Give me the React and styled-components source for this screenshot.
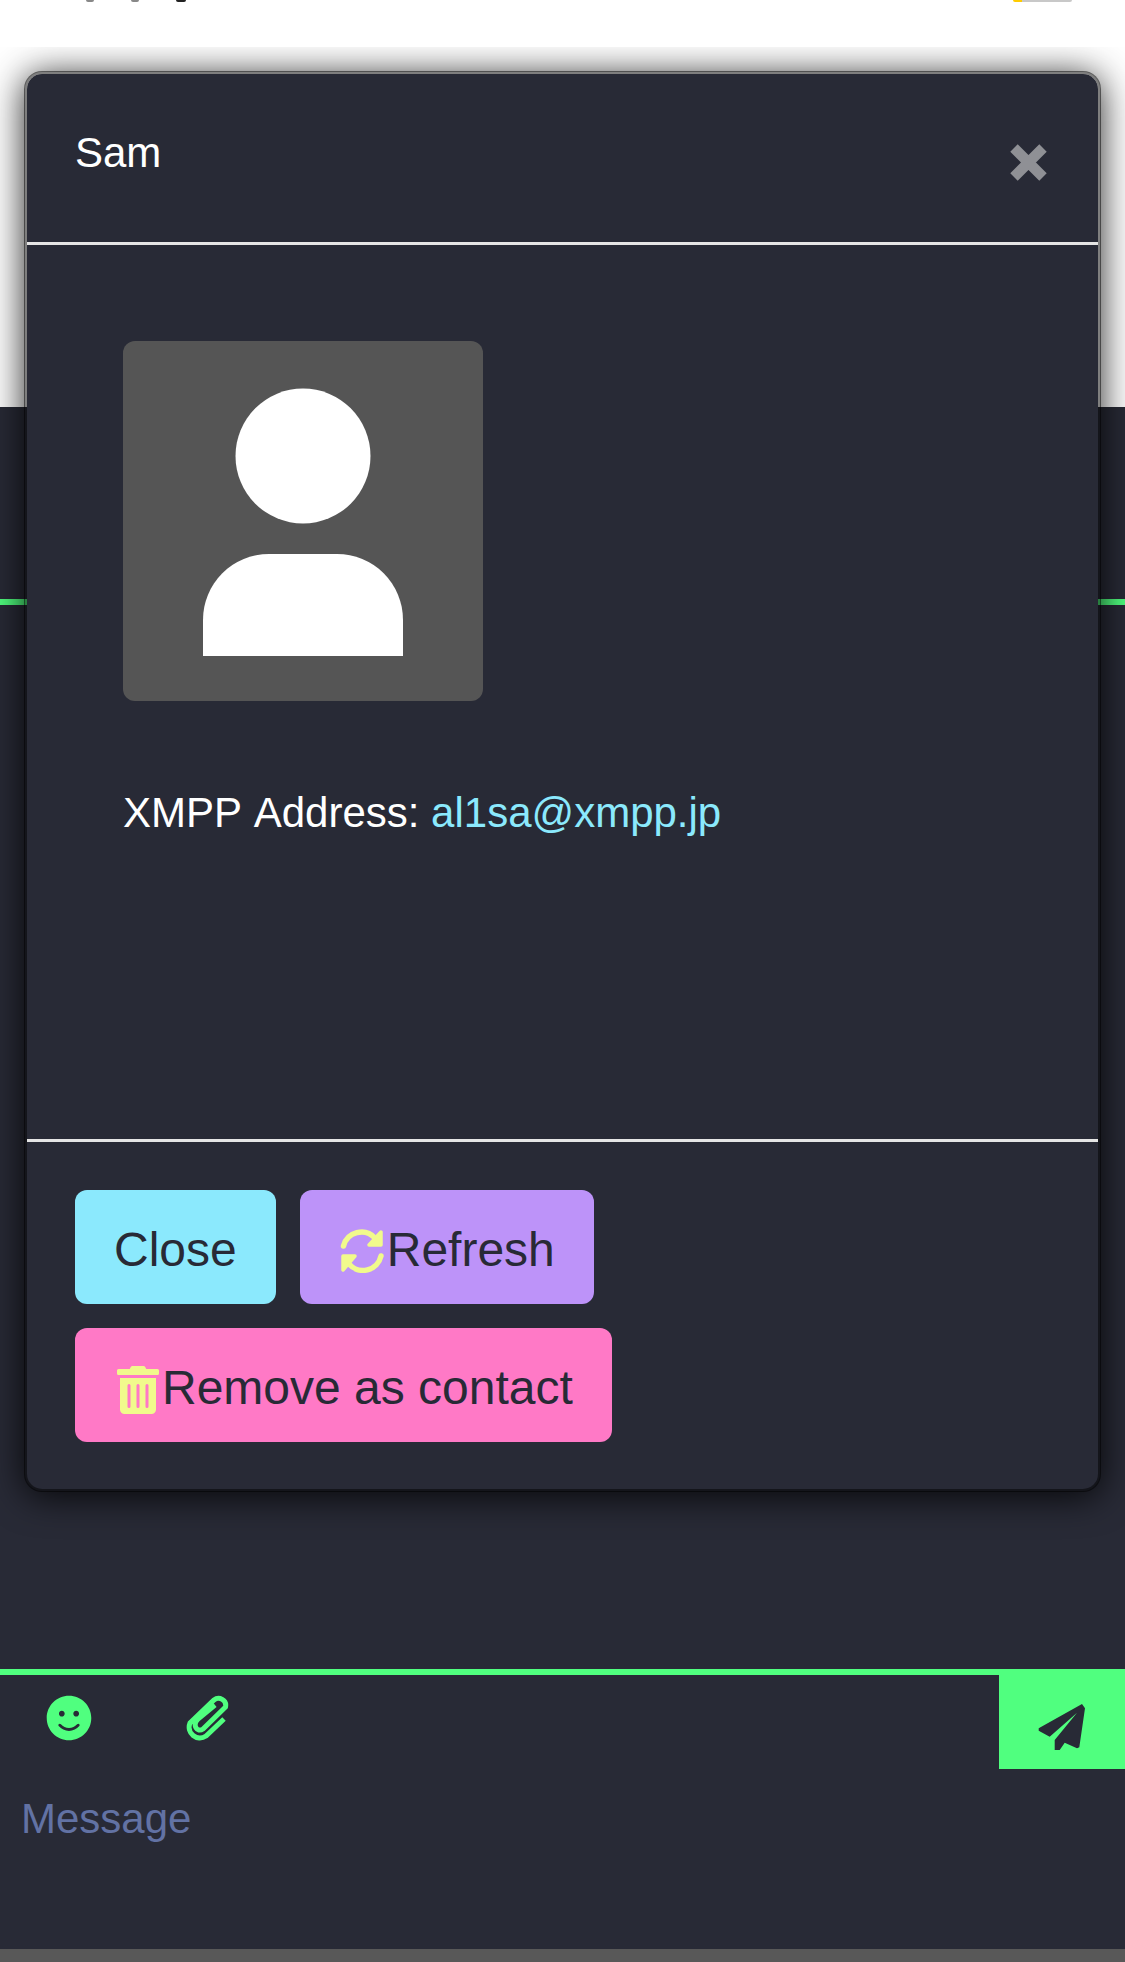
import styled, { createGlobalStyle } from "styled-components"
import { FaSmile, FaTrashAlt } from "react-icons/fa"

const GlobalStyle = createGlobalStyle`
    html, body {
        margin: 0;
        padding: 0;
        background: #282a36;
    }
    * {
        box-sizing: border-box;
    }
`

function RefreshIcon() {
    return (
        <RefreshSvg viewBox="-1 -4 48 48">
            <path d="M3.5 17 A18.5 18.5 0 0 1 35 9" fill="none" stroke="currentColor" strokeWidth="5.5" strokeLinecap="round" />
            <path d="M41 3 V16 H29 Z" fill="currentColor" stroke="currentColor" strokeWidth="3.5" strokeLinejoin="round" />
            <path d="M41 27 A18.5 18.5 0 0 1 9 35" fill="none" stroke="currentColor" strokeWidth="5.5" strokeLinecap="round" />
            <path d="M3 41 V27 H15 Z" fill="currentColor" stroke="currentColor" strokeWidth="3.5" strokeLinejoin="round" />
        </RefreshSvg>
    )
}

function ClipIcon() {
    return (
        <ClipSvg viewBox="0 0 44 47">
            <path
                d="M38 24 L20 41 C11 47 0 38 4 28 L28 5 C33 1 41 5 39.5 12 L17 34 C11 38 6 30 12 24 L29 10"
                fill="none"
                stroke="currentColor"
                strokeWidth="5"
            />
        </ClipSvg>
    )
}

function SendIcon() {
    return (
        <SendSvg viewBox="0 0 48 47">
            <path
                d="M44 0 L47 4.3 L41.3 43.3 L39 44.3 L26.7 38.7 L21.7 46 H16.7 V36 L39 8.7 L11.7 32.7 L0.7 26.7 V24.3 Z"
                fill="currentColor"
            />
        </SendSvg>
    )
}

function App() {
    return (
        <Page>
            <GlobalStyle />
            <StatusStrip>
                <StatusDots>
                    <Dot $w={8} />
                    <Dot $w={8} />
                    <Dot $w={10} $dark />
                </StatusDots>
                <Battery />
            </StatusStrip>
            <ChatArea>
                <WhiteHead />
                <ChatHeading />
                <Messages />
                <Composer>
                    <Toolbar>
                        <ToolGroup>
                            <SmileButton><FaSmile /></SmileButton>
                            <ClipButton><ClipIcon /></ClipButton>
                        </ToolGroup>
                        <SendButton><SendIcon /></SendButton>
                    </Toolbar>
                    <MessageInput>Message</MessageInput>
                </Composer>
                <Modal>
                    <ModalHeader>
                        <ModalTitle>Sam</ModalTitle>
                        <CloseX viewBox="0 0 37 37">
                            <path d="M4 4 L33 33 M33 4 L4 33" stroke="currentColor" strokeWidth="10.5" />
                        </CloseX>
                    </ModalHeader>
                    <ModalBody>
                        <Avatar>
                            <svg viewBox="0 0 360 360" width="360" height="360">
                                <circle cx="180" cy="115" r="67.5" fill="#fff" />
                                <path d="M80 315 V279 A66 66 0 0 1 146 213 H214 A66 66 0 0 1 280 279 V315 Z" fill="#fff" />
                            </svg>
                        </Avatar>
                        <Address>
                            XMPP Address: <AddressLink>al1sa@xmpp.jp</AddressLink>
                        </Address>
                    </ModalBody>
                    <ModalFooter>
                        <Button $bg="#8be9fd">Close</Button>
                        <Button $bg="#bd93f9"><RefreshIcon />Refresh</Button>
                        <Button $bg="#ff79c6"><TrashWrap><FaTrashAlt /></TrashWrap>Remove as contact</Button>
                    </ModalFooter>
                </Modal>
            </ChatArea>
            <BottomBar />
        </Page>
    )
}

export default App;


const Page = styled.div`
    display: flex;
    flex-direction: column;
    width: 1125px;
    height: 1962px;
    overflow: hidden;
    background: #282a36;
    font-family: "Liberation Sans", Arial, sans-serif;
`

const StatusStrip = styled.div`
    display: flex;
    justify-content: space-between;
    align-items: flex-start;
    height: 47px;
    padding: 0 53px 0 86px;
    background: #fff;
`

const StatusDots = styled.div`
    display: flex;
    gap: 37px;
`

const Dot = styled.span`
    display: block;
    width: ${props => props.$w}px;
    height: 2px;
    border-radius: 0 0 4px 4px;
    background: ${props => props.$dark ? "#222" : "#888"};
`

const Battery = styled.span`
    display: block;
    width: 59px;
    height: 2px;
    border-radius: 0 0 5px 5px;
    background: linear-gradient(to right, #ffcc00 9px, #c8c8c8 9px);
`

const ChatArea = styled.div`
    position: relative;
    display: flex;
    flex-direction: column;
    flex: 1;
    overflow: hidden;
`

const WhiteHead = styled.div`
    height: 360px;
    background: #fff;
`

const ChatHeading = styled.div`
    height: 198px;
    background: #282a36;
    border-bottom: 6px solid #50ff7f;
`

const Messages = styled.div`
    flex: 1;
    background: #282a36;
`

const Composer = styled.div`
    height: 280px;
    border-top: 6px solid #50ff7f;
    background: #282a36;
`

const Toolbar = styled.div`
    display: flex;
    justify-content: space-between;
    align-items: flex-start;
`

const ToolGroup = styled.div`
    display: flex;
    padding: 20px 0 0 46px;
    color: #50ff7f;
`

const SmileButton = styled.div`
    width: 140px;
    height: 47px;
    font-size: 46px;
    line-height: 0;
`

const ClipButton = styled.div`
    width: 44px;
    height: 47px;
`

const ClipSvg = styled.svg`
    display: block;
    width: 44px;
    height: 47px;
`

const SendButton = styled.div`
    display: flex;
    align-items: center;
    justify-content: center;
    width: 126px;
    height: 100px;
    margin-top: -6px;
    padding-top: 16px;
    background: #50ff7f;
    color: #282a36;
`

const SendSvg = styled.svg`
    display: block;
    width: 48px;
    height: 47px;
`

const MessageInput = styled.div`
    padding: 20px 21px;
    font-size: 42px;
    line-height: 60px;
    color: #6272a4;
`

const BottomBar = styled.div`
    height: 13px;
    flex: none;
    background: #585858;
`

const Modal = styled.div`
    position: absolute;
    top: 24px;
    left: 24px;
    right: 24px;
    border: 3px solid rgba(0, 0, 0, 0.5);
    border-radius: 18px;
    background: #282a36;
    background-clip: padding-box;
    box-shadow: 0 4px 36px rgba(0, 0, 0, 0.85);
`

const ModalHeader = styled.div`
    display: flex;
    justify-content: space-between;
    align-items: flex-start;
    height: 171px;
    padding: 49px 51px 0 48px;
    border-bottom: 3px solid #e5e5e5;
`

const ModalTitle = styled.div`
    font-size: 42px;
    line-height: 60px;
    color: #fff;
`

const CloseX = styled.svg`
    width: 37px;
    height: 37px;
    margin-top: 21px;
    color: #8f9095;
`

const ModalBody = styled.div`
    height: 897px;
    padding: 96px 96px 0 96px;
    border-bottom: 3px solid #e5e5e5;
`

const Avatar = styled.div`
    width: 360px;
    height: 360px;
    border-radius: 12px;
    background: #555;
    overflow: hidden;
`

const Address = styled.div`
    margin-top: 82px;
    font-size: 42px;
    line-height: 60px;
    font-kerning: none;
    color: #fff;
`

const AddressLink = styled.span`
    color: #8be9fd;
`

const ModalFooter = styled.div`
    display: flex;
    flex-wrap: wrap;
    gap: 24px;
    padding: 48px 48px 47px 48px;
`

const Button = styled.div`
    display: flex;
    align-items: center;
    height: 114px;
    padding: 6px 39px 0 39px;
    border-radius: 12px;
    background: ${props => props.$bg};
    color: #282a36;
    font-size: 48px;
    line-height: 72px;
`

const RefreshSvg = styled.svg`
    width: 48px;
    height: 48px;
    margin-top: -3px;
    color: #f1fa8c;
`

const TrashWrap = styled.span`
    display: flex;
    justify-content: center;
    width: 48px;
    margin-top: 4px;
    color: #f1fa8c;
`
